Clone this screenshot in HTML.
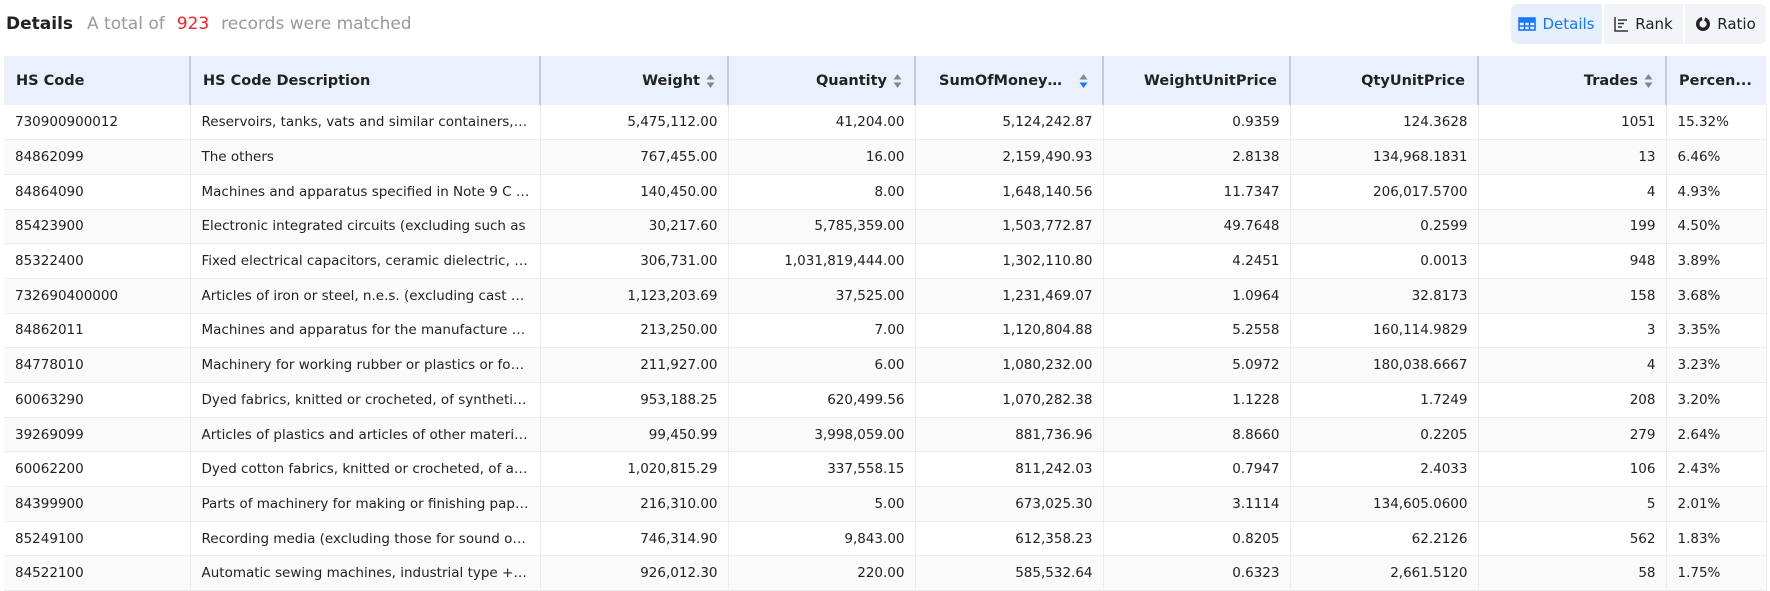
<!DOCTYPE html>
<html><head><meta charset="utf-8"><style>
*{box-sizing:border-box;margin:0;padding:0}
body{width:1770px;height:586px;overflow:hidden;background:#fff;font-family:Tahoma,"DejaVu Sans","Liberation Sans",sans-serif;color:#222}
.top{position:absolute;left:6px;top:12px;height:24px;display:flex;align-items:center;font-size:17px}
.top b{color:#222;font-weight:bold;margin-right:14px}
.top .g{color:#999}
.top .r{color:#f5222d;margin:0 12px}
.btns{position:absolute;left:1511px;top:4px;display:flex;height:40px}
.btn{display:flex;align-items:center;justify-content:center;background:#f3f4f8;font-size:15px;color:#222;margin-right:2px}
.btn.a{background:#e6f0fd;color:#1677ff;border-radius:6px 0 0 6px}
.btn:last-child{border-radius:0 6px 6px 0;margin-right:0}
.btn svg{margin-right:6px}
table{position:absolute;left:4px;top:56px;border-collapse:collapse;table-layout:fixed;width:1762px}
th{background:#eaf0fd;height:49px;font-size:14.5px;font-weight:bold;color:#222;padding:0 12px;border-right:2px solid #c5cbd6;white-space:nowrap;overflow:hidden;text-overflow:ellipsis}
th:last-child{border-right:none}
td{height:34.7px;font-size:13.5px;padding:0 10px 0 11px;border-right:1px solid #ececec;border-bottom:1px solid #ececec;white-space:nowrap;overflow:hidden;text-overflow:ellipsis;color:#222}
tr:nth-child(odd) td{background:#fafafa}
.R{text-align:right}.L{text-align:left}
.s{display:inline-block;vertical-align:middle;margin-left:6px}
.el{display:inline-block;max-width:128px;overflow:hidden;text-overflow:ellipsis;vertical-align:middle}
</style></head><body>
<div class="top"><b>Details</b><span class="g">A total of</span><span class="r">923</span><span class="g">records were matched</span></div>
<div class="btns">
<div class="btn a" style="width:91px"><svg width="18" height="14" viewBox="0 0 18 14"><g fill="none" stroke="#1677ff" stroke-width="1.6"><rect x="1" y="1" width="16" height="12"/><path d="M1 5h16M1 9h16M6.5 1v12M11.5 1v12"/></g><rect x="1" y="1" width="16" height="4" fill="#1677ff"/></svg>Details</div>
<div class="btn" style="width:79px"><svg width="15" height="15" viewBox="0 0 15 15"><g fill="none" stroke="#333" stroke-width="1.5"><path d="M1 0v14h13"/><path d="M4 3h9M4 6.5h6M4 10h4"/></g></svg>Rank</div>
<div class="btn" style="width:81px"><svg width="16" height="16" viewBox="0 0 16 16"><circle cx="8" cy="8" r="5.3" fill="none" stroke="#222" stroke-width="3.4" stroke-dasharray="24 2.5"/></svg>Ratio</div>
</div>
<table>
<colgroup><col style="width:186px"><col style="width:350px"><col style="width:188px"><col style="width:187px"><col style="width:188px"><col style="width:187px"><col style="width:188px"><col style="width:188px"><col style="width:100px"></colgroup>
<tr><th class="L">HS Code</th><th class="L">HS Code Description</th>
<th class="R">Weight<svg class="s" width="9" height="16" viewBox="0 0 9 16"><path d="M4.5 1L8.5 6.5H.5z" fill="#888"/><path d="M4.5 15L8.5 9.5H.5z" fill="#888"/></svg></th>
<th class="R">Quantity<svg class="s" width="9" height="16" viewBox="0 0 9 16"><path d="M4.5 1L8.5 6.5H.5z" fill="#888"/><path d="M4.5 15L8.5 9.5H.5z" fill="#888"/></svg></th>
<th class="R" style="padding-right:14px"><span class="el">SumOfMoney(USD)</span><svg class="s" style="margin-left:12px" width="9" height="16" viewBox="0 0 9 16"><path d="M4.5 1L8.5 6.5H.5z" fill="#888"/><path d="M4.5 15L8.5 9.5H.5z" fill="#1677ff"/></svg></th>
<th class="R">WeightUnitPrice</th><th class="R">QtyUnitPrice</th>
<th class="R">Trades<svg class="s" width="9" height="16" viewBox="0 0 9 16"><path d="M4.5 1L8.5 6.5H.5z" fill="#888"/><path d="M4.5 15L8.5 9.5H.5z" fill="#888"/></svg></th>
<th class="L">Percen...</th></tr>
<tr><td>730900900012</td><td>Reservoirs, tanks, vats and similar containers, of iron</td><td class="R">5,475,112.00</td><td class="R">41,204.00</td><td class="R">5,124,242.87</td><td class="R">0.9359</td><td class="R">124.3628</td><td class="R">1051</td><td>15.32%</td></tr>
<tr><td>84862099</td><td>The others</td><td class="R">767,455.00</td><td class="R">16.00</td><td class="R">2,159,490.93</td><td class="R">2.8138</td><td class="R">134,968.1831</td><td class="R">13</td><td>6.46%</td></tr>
<tr><td>84864090</td><td>Machines and apparatus specified in Note 9 C to this</td><td class="R">140,450.00</td><td class="R">8.00</td><td class="R">1,648,140.56</td><td class="R">11.7347</td><td class="R">206,017.5700</td><td class="R">4</td><td>4.93%</td></tr>
<tr><td>85423900</td><td>Electronic integrated circuits (excluding such as</td><td class="R">30,217.60</td><td class="R">5,785,359.00</td><td class="R">1,503,772.87</td><td class="R">49.7648</td><td class="R">0.2599</td><td class="R">199</td><td>4.50%</td></tr>
<tr><td>85322400</td><td>Fixed electrical capacitors, ceramic dielectric, multilayer</td><td class="R">306,731.00</td><td class="R">1,031,819,444.00</td><td class="R">1,302,110.80</td><td class="R">4.2451</td><td class="R">0.0013</td><td class="R">948</td><td>3.89%</td></tr>
<tr><td>732690400000</td><td>Articles of iron or steel, n.e.s. (excluding cast articles</td><td class="R">1,123,203.69</td><td class="R">37,525.00</td><td class="R">1,231,469.07</td><td class="R">1.0964</td><td class="R">32.8173</td><td class="R">158</td><td>3.68%</td></tr>
<tr><td>84862011</td><td>Machines and apparatus for the manufacture of semi</td><td class="R">213,250.00</td><td class="R">7.00</td><td class="R">1,120,804.88</td><td class="R">5.2558</td><td class="R">160,114.9829</td><td class="R">3</td><td>3.35%</td></tr>
<tr><td>84778010</td><td>Machinery for working rubber or plastics or for the</td><td class="R">211,927.00</td><td class="R">6.00</td><td class="R">1,080,232.00</td><td class="R">5.0972</td><td class="R">180,038.6667</td><td class="R">4</td><td>3.23%</td></tr>
<tr><td>60063290</td><td>Dyed fabrics, knitted or crocheted, of synthetic fibres</td><td class="R">953,188.25</td><td class="R">620,499.56</td><td class="R">1,070,282.38</td><td class="R">1.1228</td><td class="R">1.7249</td><td class="R">208</td><td>3.20%</td></tr>
<tr><td>39269099</td><td>Articles of plastics and articles of other materials of</td><td class="R">99,450.99</td><td class="R">3,998,059.00</td><td class="R">881,736.96</td><td class="R">8.8660</td><td class="R">0.2205</td><td class="R">279</td><td>2.64%</td></tr>
<tr><td>60062200</td><td>Dyed cotton fabrics, knitted or crocheted, of a width</td><td class="R">1,020,815.29</td><td class="R">337,558.15</td><td class="R">811,242.03</td><td class="R">0.7947</td><td class="R">2.4033</td><td class="R">106</td><td>2.43%</td></tr>
<tr><td>84399900</td><td>Parts of machinery for making or finishing paper or</td><td class="R">216,310.00</td><td class="R">5.00</td><td class="R">673,025.30</td><td class="R">3.1114</td><td class="R">134,605.0600</td><td class="R">5</td><td>2.01%</td></tr>
<tr><td>85249100</td><td>Recording media (excluding those for sound or image</td><td class="R">746,314.90</td><td class="R">9,843.00</td><td class="R">612,358.23</td><td class="R">0.8205</td><td class="R">62.2126</td><td class="R">562</td><td>1.83%</td></tr>
<tr><td>84522100</td><td>Automatic sewing machines, industrial type + data</td><td class="R">926,012.30</td><td class="R">220.00</td><td class="R">585,532.64</td><td class="R">0.6323</td><td class="R">2,661.5120</td><td class="R">58</td><td>1.75%</td></tr>
</table>
</body></html>
